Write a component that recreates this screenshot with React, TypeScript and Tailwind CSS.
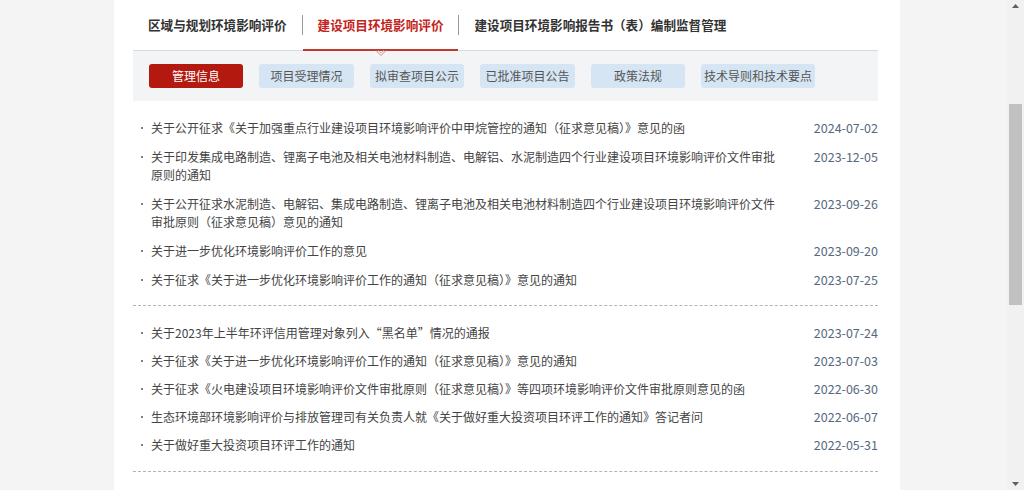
const navTabs = [
  { label: "区域与规划环境影响评价", active: false },
  { label: "建设项目环境影响评价", active: true },
  { label: "建设项目环境影响报告书（表）编制监督管理", active: false },
];

const subTabs = [
  { label: "管理信息", w: "w-[94px]" },
  { label: "项目受理情况", w: "w-[95px]" },
  { label: "拟审查项目公示", w: "w-[94px]" },
  { label: "已批准项目公告", w: "w-[95px]" },
  { label: "政策法规", w: "w-[94px]" },
  { label: "技术导则和技术要点", w: "w-[114px]" },
];

type Item = { lines: string[]; date: string };

const groups: { gap: string; pb: string; items: Item[] }[] = [
  {
    gap: "gap-[11px]",
    pb: "pb-[16px]",
    items: [
      { lines: ["关于公开征求《关于加强重点行业建设项目环境影响评价中甲烷管控的通知（征求意见稿）》意见的函"], date: "2024-07-02" },
      {
        lines: ["关于印发集成电路制造、锂离子电池及相关电池材料制造、电解铝、水泥制造四个行业建设项目环境影响评价文件审批", "原则的通知"],
        date: "2023-12-05",
      },
      {
        lines: ["关于公开征求水泥制造、电解铝、集成电路制造、锂离子电池及相关电池材料制造四个行业建设项目环境影响评价文件", "审批原则（征求意见稿）意见的通知"],
        date: "2023-09-26",
      },
      { lines: ["关于进一步优化环境影响评价工作的意见"], date: "2023-09-20" },
      { lines: ["关于征求《关于进一步优化环境影响评价工作的通知（征求意见稿）》意见的通知"], date: "2023-07-25" },
    ],
  },
  {
    gap: "gap-[10px]",
    pb: "pb-[17px]",
    items: [
      { lines: ["关于2023年上半年环评信用管理对象列入“黑名单”情况的通报"], date: "2023-07-24" },
      { lines: ["关于征求《关于进一步优化环境影响评价工作的通知（征求意见稿）》意见的通知"], date: "2023-07-03" },
      { lines: ["关于征求《火电建设项目环境影响评价文件审批原则（征求意见稿）》等四项环境影响评价文件审批原则意见的函"], date: "2022-06-30" },
      { lines: ["生态环境部环境影响评价与排放管理司有关负责人就《关于做好重大投资项目环评工作的通知》答记者问"], date: "2022-06-07" },
      { lines: ["关于做好重大投资项目环评工作的通知"], date: "2022-05-31" },
    ],
  },
];

export default function App() {
  return (
    <div className="flex h-[490px] w-[1024px] overflow-hidden bg-[#f4f4f4] font-['Noto_Sans_CJK_SC','Microsoft_YaHei',sans-serif]">
      <div className="flex-1">
        <div className="ml-[114px] h-full w-[786px] bg-white pl-[19px] pr-[22px]">
          <nav className="flex h-[51px] items-center border-b border-[#d3dbe4]">
            {navTabs.map((t, i) => (
              <div key={t.label} className="relative flex h-full items-center">
                {i > 0 && <span className="h-[20px] w-px bg-[#9a9a9a]" />}
                <span
                  className={
                    "relative flex h-full items-center px-[15px] text-[12.6px] font-bold " +
                    (t.active ? "text-[#c3241b]" : "text-[#333]")
                  }
                >
                  {t.label}
                  {t.active && (
                    <>
                      <span className="absolute -bottom-px left-0 right-0 h-[2px] bg-[#c0392f]" />
                      <svg className="absolute -bottom-[7px] left-1/2 -ml-[6px]" width="12" height="7" viewBox="0 0 12 7">
                        <path d="M1 0.5 L6 5.5 L11 0.5" fill="none" stroke="#d9877f" strokeWidth="1" />
                        <path d="M3.5 0.5 L6 3 L8.5 0.5" fill="none" stroke="#e6a8a2" strokeWidth="1" />
                      </svg>
                    </>
                  )}
                </span>
              </div>
            ))}
          </nav>

          <div className="flex h-[50px] items-center gap-[16px] bg-[#f2f4f6] pl-[16px]">
            {subTabs.map((s, i) => (
              <button
                key={s.label}
                className={
                  "h-[24px] rounded-[3px] text-[12px] " +
                  s.w +
                  " " +
                  (i === 0 ? "bg-[#b4190f] text-white" : "bg-[#d5e5f3] text-[#555]")
                }
              >
                {s.label}
              </button>
            ))}
          </div>

          {groups.map((g, gi) => (
            <ul
              key={gi}
              className={"flex flex-col border-b border-dashed border-[#a9b6c3] pt-[18px] pl-[8px] " + g.gap + " " + g.pb}
            >
              {g.items.map((it) => (
                <li key={it.date + it.lines[0]} className="flex items-start text-[12px] leading-[18px]">
                  <span className="mt-[8px] mr-[8px] h-[2px] w-[2px] shrink-0 rounded-full bg-[#555]" />
                  <span className="w-[624px] text-[#444]">
                    {it.lines.map((l, li) => (
                      <span key={li} className="block whitespace-nowrap">
                        {l}
                      </span>
                    ))}
                  </span>
                  <span className="ml-auto text-[12.5px] text-[#56687d]">{it.date}</span>
                </li>
              ))}
            </ul>
          ))}
        </div>
      </div>

      <div className="flex w-[17px] flex-col items-center bg-[#f1f1f1]">
        <svg className="mt-[4px]" width="7" height="4" viewBox="0 0 7 4">
          <path d="M0 4 L3.5 0 L7 4 Z" fill="#606060" />
        </svg>
        <div className="mt-[96px] h-[201px] w-[13px] bg-[#c1c1c1]" />
        <div className="flex-1" />
        <svg className="mb-[4px]" width="7" height="4" viewBox="0 0 7 4">
          <path d="M0 0 L7 0 L3.5 4 Z" fill="#606060" />
        </svg>
      </div>
    </div>
  );
}
